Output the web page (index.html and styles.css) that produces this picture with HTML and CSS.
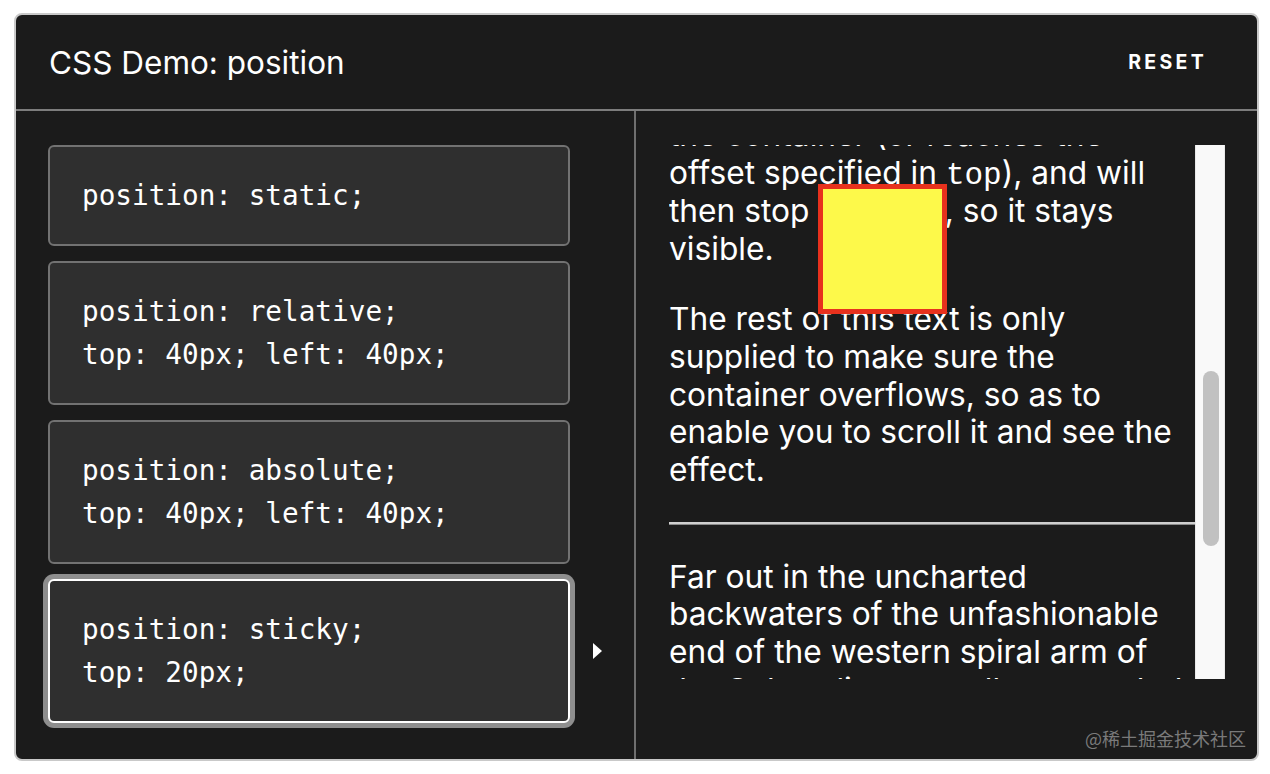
FILE: index.html
```html
<!DOCTYPE html>
<html lang="en">
<head>
<meta charset="utf-8">
<title>CSS Demo: position</title>
<link rel="stylesheet" href="styles.css">
</head>
<body>
<div class="frame">
  <header class="header">
    <h1 class="title">CSS Demo: position</h1>
    <button class="reset">RESET</button>
  </header>
  <div class="main">
    <div class="choices">
      <div class="choice-row">
        <div class="card"><code>position: static;</code></div>
        <span class="arrow-slot"></span>
      </div>
      <div class="choice-row">
        <div class="card"><code>position: relative;<br>top: 40px; left: 40px;</code></div>
        <span class="arrow-slot"></span>
      </div>
      <div class="choice-row">
        <div class="card"><code>position: absolute;<br>top: 40px; left: 40px;</code></div>
        <span class="arrow-slot"></span>
      </div>
      <div class="choice-row">
        <div class="card selected"><code>position: sticky;<br>top: 20px;</code></div>
        <span class="arrow-slot"><span class="arrow"></span></span>
      </div>
    </div>
    <div class="output">
      <div class="scroller">
        <div class="viewport">
          <div class="content">
            <p>The element will scroll along with its container, until it is at the top of the container (or reaches the<br>offset specified in <code class="inline">top</code>), and will then stop scrolling, so it stays visible.</p>
            <p>The rest of this text is only supplied to make sure the container overflows, so as to enable you to scroll it and see the effect.</p>
            <hr class="rule">
            <p>Far out in the uncharted backwaters of the unfashionable end of the western spiral arm of the Galaxy lies a small unregarded yellow sun.</p>
          </div>
          <div class="box"></div>
        </div>
        <div class="track"><div class="thumb"></div></div>
      </div>
    </div>
  </div>
  <div class="watermark">@稀土掘金技术社区</div>
</div>
</body>
</html>
```

FILE: styles.css
```css
html, body {
  margin: 0;
  padding: 0;
  background: #ffffff;
}

.frame {
  position: relative;
  box-sizing: border-box;
  margin: 13px 11px 13px 14px;
  height: 748px;
  border: 2px solid #c9c9c9;
  border-radius: 8px;
  background: #1b1b1b;
  overflow: hidden;
  display: flex;
  flex-direction: column;
  font-family: Inter, "Noto Sans", sans-serif;
  color: #ffffff;
}

.header {
  box-sizing: border-box;
  height: 96px;
  flex: none;
  display: flex;
  align-items: center;
  justify-content: space-between;
  padding: 0 50px 0 33px;
  border-bottom: 2px solid #7d7d7d;
}

.title {
  margin: 0;
  font-size: 31.5px;
  font-weight: 400;
  letter-spacing: 0;
}

.reset {
  background: none;
  border: 0;
  padding: 0;
  color: #ffffff;
  font-family: Inter, "Noto Sans", sans-serif;
  font-size: 19.5px;
  font-weight: 700;
  letter-spacing: 3.3px;
}

.main {
  flex: 1;
  display: flex;
  min-height: 0;
}

.choices {
  box-sizing: border-box;
  width: 620px;
  flex: none;
  border-right: 2px solid #6f6f6f;
  padding: 34px 0 0 32px;
  display: flex;
  flex-direction: column;
  gap: 15px;
}

.choice-row {
  display: flex;
  align-items: center;
}

.card {
  box-sizing: border-box;
  width: 522px;
  padding: 27px 32px;
  border: 2px solid #727272;
  border-radius: 6px;
  background: #2f2f2f;
  font-family: "DejaVu Sans Mono", "Liberation Mono", monospace;
  font-size: 27.7px;
  line-height: 43px;
  color: #ffffff;
}

.card code {
  font-family: inherit;
}

.card.selected {
  border-color: #ffffff;
  box-shadow: 0 0 0 5px #8e8e8e;
}

.arrow-slot {
  display: flex;
  align-items: center;
  margin-left: 23px;
  width: 10px;
  height: 16px;
}

.arrow {
  width: 0;
  height: 0;
  border-top: 8px solid transparent;
  border-bottom: 8px solid transparent;
  border-left: 9px solid #ffffff;
}

.output {
  flex: 1;
  padding: 34px 32px 0 33px;
}

.scroller {
  display: flex;
  height: 534px;
}

.viewport {
  position: relative;
  width: 526px;
  flex: none;
  overflow: hidden;
}

.content {
  margin-top: -104px;
  font-size: 31.7px;
  line-height: 37.7px;
}

.content p {
  margin: 0 0 33px;
}

.inline {
  font-family: "Liberation Mono", "DejaVu Sans Mono", monospace;
  font-size: 31px;
  line-height: 1;
}

.rule {
  margin: 0 0 33px;
  height: 0;
  border: 0;
  border-top: 2px solid #cfcfcf;
  border-bottom: 1px solid #8a8a8a;
}

.box {
  position: absolute;
  left: 149px;
  top: 39px;
  box-sizing: border-box;
  width: 129px;
  height: 130px;
  border: 5px solid #e8311d;
  background: #fdf94a;
}

.track {
  box-sizing: border-box;
  width: 30px;
  flex: none;
  background: #f9f9f9;
  border-left: 1px solid #e9e9e9;
  border-right: 1px solid #e9e9e9;
  padding: 226px 0 0 7px;
}

.thumb {
  width: 16px;
  height: 175px;
  border-radius: 8px;
  background: #c1c1c1;
}

.watermark {
  position: absolute;
  right: 11px;
  bottom: 8px;
  font-family: "Noto Sans CJK SC", sans-serif;
  font-size: 18px;
  color: #7a7a7a;
}
```
